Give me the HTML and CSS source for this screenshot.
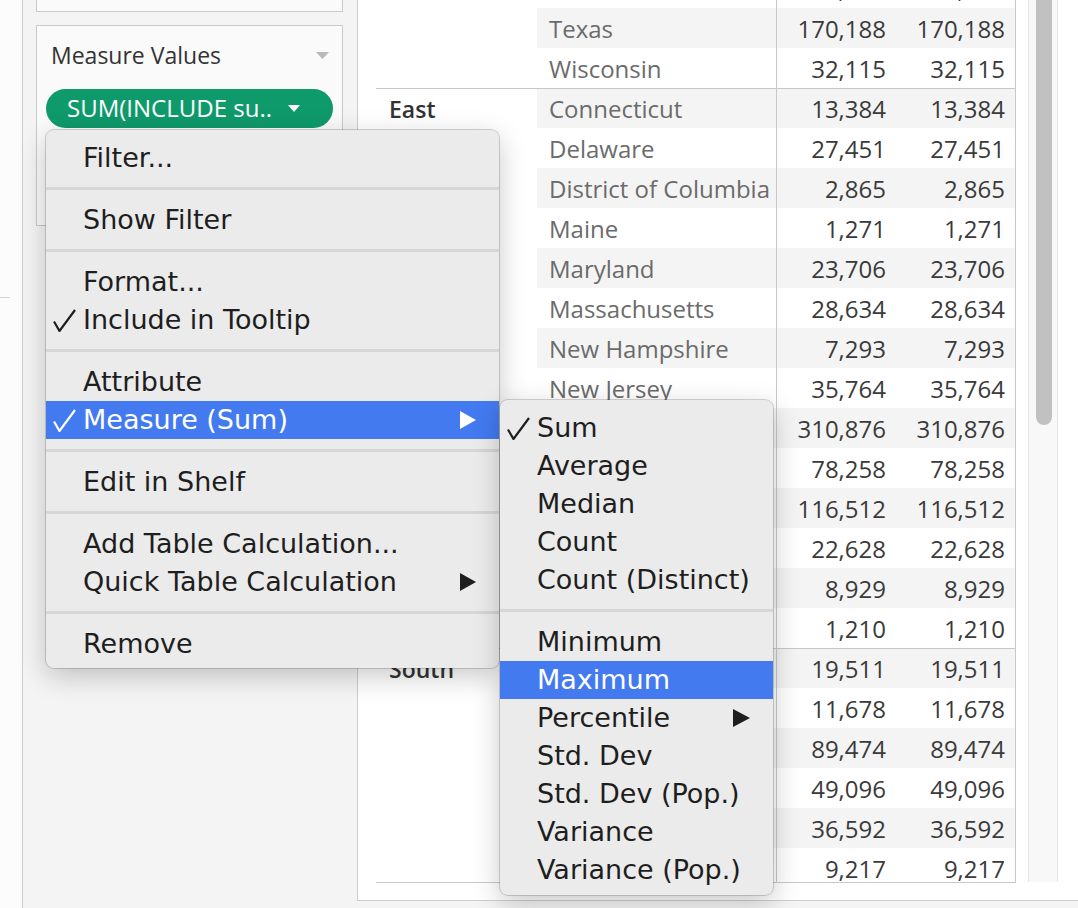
FILE: index.html
```html
<!DOCTYPE html>
<html>
<head>
<meta charset="utf-8">
<title>Measure Values menu</title>
<link rel="stylesheet" href="styles.css">
</head>
<body>
<div class="app">
  <div class="gutter"><div class="gutter-tick"></div></div>
  <aside class="sidebar">
    <div class="card card-top"></div>
    <div class="card card-mv">
      <div class="card-head">
        <span class="card-title">Measure Values</span>
        <svg class="caret-gray" width="13" height="7" viewBox="0 0 13 7"><path d="M0 0H13L6.5 7Z"/></svg>
      </div>
      <div class="pill">
        <span class="pill-text">SUM(INCLUDE su..</span>
        <svg class="caret-white" width="12" height="7" viewBox="0 0 12 7"><path d="M0 0H12L6 7Z"/></svg>
      </div>
    </div>
  </aside>
  <div class="main-wrap">
    <main class="main">
      <div class="table-view">
        <div class="rows">
          <div class="row"><div class="cell region"></div><div class="cell state"></div><div class="cell num num1">1,315</div><div class="cell num num2">1,315</div></div>
          <div class="row band"><div class="cell region"></div><div class="cell state">Texas</div><div class="cell num num1">170,188</div><div class="cell num num2">170,188</div></div>
          <div class="row"><div class="cell region"></div><div class="cell state">Wisconsin</div><div class="cell num num1">32,115</div><div class="cell num num2">32,115</div></div>
          <div class="row band group"><div class="cell region">East</div><div class="cell state">Connecticut</div><div class="cell num num1">13,384</div><div class="cell num num2">13,384</div></div>
          <div class="row"><div class="cell region"></div><div class="cell state">Delaware</div><div class="cell num num1">27,451</div><div class="cell num num2">27,451</div></div>
          <div class="row band"><div class="cell region"></div><div class="cell state">District of Columbia</div><div class="cell num num1">2,865</div><div class="cell num num2">2,865</div></div>
          <div class="row"><div class="cell region"></div><div class="cell state">Maine</div><div class="cell num num1">1,271</div><div class="cell num num2">1,271</div></div>
          <div class="row band"><div class="cell region"></div><div class="cell state">Maryland</div><div class="cell num num1">23,706</div><div class="cell num num2">23,706</div></div>
          <div class="row"><div class="cell region"></div><div class="cell state">Massachusetts</div><div class="cell num num1">28,634</div><div class="cell num num2">28,634</div></div>
          <div class="row band"><div class="cell region"></div><div class="cell state">New Hampshire</div><div class="cell num num1">7,293</div><div class="cell num num2">7,293</div></div>
          <div class="row"><div class="cell region"></div><div class="cell state">New Jersey</div><div class="cell num num1">35,764</div><div class="cell num num2">35,764</div></div>
          <div class="row band"><div class="cell region"></div><div class="cell state"></div><div class="cell num num1">310,876</div><div class="cell num num2">310,876</div></div>
          <div class="row"><div class="cell region"></div><div class="cell state"></div><div class="cell num num1">78,258</div><div class="cell num num2">78,258</div></div>
          <div class="row band"><div class="cell region"></div><div class="cell state"></div><div class="cell num num1">116,512</div><div class="cell num num2">116,512</div></div>
          <div class="row"><div class="cell region"></div><div class="cell state"></div><div class="cell num num1">22,628</div><div class="cell num num2">22,628</div></div>
          <div class="row band"><div class="cell region"></div><div class="cell state"></div><div class="cell num num1">8,929</div><div class="cell num num2">8,929</div></div>
          <div class="row"><div class="cell region"></div><div class="cell state"></div><div class="cell num num1">1,210</div><div class="cell num num2">1,210</div></div>
          <div class="row band group"><div class="cell region">South</div><div class="cell state"></div><div class="cell num num1">19,511</div><div class="cell num num2">19,511</div></div>
          <div class="row"><div class="cell region"></div><div class="cell state"></div><div class="cell num num1">11,678</div><div class="cell num num2">11,678</div></div>
          <div class="row band"><div class="cell region"></div><div class="cell state"></div><div class="cell num num1">89,474</div><div class="cell num num2">89,474</div></div>
          <div class="row"><div class="cell region"></div><div class="cell state"></div><div class="cell num num1">49,096</div><div class="cell num num2">49,096</div></div>
          <div class="row band"><div class="cell region"></div><div class="cell state"></div><div class="cell num num1">36,592</div><div class="cell num num2">36,592</div></div>
          <div class="row"><div class="cell region"></div><div class="cell state"></div><div class="cell num num1">9,217</div><div class="cell num num2">9,217</div></div>
        </div>
      </div>
      <div class="scrollbar"><div class="thumb"></div></div>
    </main>
  </div>
</div>

<div class="menu">
  <div class="mi">Filter...</div>
  <div class="sep"></div>
  <div class="mi">Show Filter</div>
  <div class="sep"></div>
  <div class="mi">Format...</div>
  <div class="mi"><svg class="chk" width="23" height="23" viewBox="0 0 23 23"><path d="M1 12.5L6.5 22L22 1" fill="none" stroke="currentColor" stroke-width="2.2"/></svg>Include in Tooltip</div>
  <div class="sep"></div>
  <div class="mi">Attribute</div>
  <div class="mi active"><svg class="chk" width="23" height="23" viewBox="0 0 23 23"><path d="M1 12.5L6.5 22L22 1" fill="none" stroke="currentColor" stroke-width="2.2"/></svg>Measure (Sum)<svg class="arrow" width="16" height="18" viewBox="0 0 16 18"><path d="M0 0L16 9L0 18Z"/></svg></div>
  <div class="sep"></div>
  <div class="mi">Edit in Shelf</div>
  <div class="sep"></div>
  <div class="mi">Add Table Calculation...</div>
  <div class="mi">Quick Table Calculation<svg class="arrow" width="16" height="18" viewBox="0 0 16 18"><path d="M0 0L16 9L0 18Z"/></svg></div>
  <div class="sep"></div>
  <div class="mi">Remove</div>
</div>

<div class="menu submenu">
  <div class="mi"><svg class="chk" width="23" height="23" viewBox="0 0 23 23"><path d="M1 12.5L6.5 22L22 1" fill="none" stroke="currentColor" stroke-width="2.2"/></svg>Sum</div>
  <div class="mi">Average</div>
  <div class="mi">Median</div>
  <div class="mi">Count</div>
  <div class="mi">Count (Distinct)</div>
  <div class="sep"></div>
  <div class="mi">Minimum</div>
  <div class="mi active">Maximum</div>
  <div class="mi">Percentile<svg class="arrow" width="17" height="18" viewBox="0 0 17 18"><path d="M0 0L17 9L0 18Z"/></svg></div>
  <div class="mi">Std. Dev</div>
  <div class="mi">Std. Dev (Pop.)</div>
  <div class="mi">Variance</div>
  <div class="mi">Variance (Pop.)</div>
</div>
</body>
</html>
```

FILE: styles.css
```css
* { box-sizing: border-box; }
html, body { margin: 0; padding: 0; }
body {
  width: 1078px;
  height: 908px;
  overflow: hidden;
  position: relative;
  background: #f4f4f4;
  font-family: "Open Sans", "DejaVu Sans", sans-serif;
}
.app { display: flex; height: 908px; }

.gutter { width: 22px; flex: none; background: #fcfcfc; padding-top: 297px; }
.gutter-tick { width: 10px; height: 1px; background: #d2d2d2; }

.sidebar {
  width: 335px;
  flex: none;
  border-left: 1px solid #cdcdcd;
  background: #f4f4f4;
  padding: 0 14px 0 13px;
  display: flex;
  flex-direction: column;
  gap: 13px;
}
.card { background: #fafafa; border: 1px solid #c9c9c9; }
.card-top { height: 12px; border-top: none; }
.card-mv { height: 201px; }
.card-head {
  display: flex;
  align-items: center;
  justify-content: space-between;
  padding: 13px 13px 0 14px;
  height: 45px;
}
.card-title { font-size: 23px; line-height: 30px; color: #333; }
.caret-gray { fill: #b9b9b9; margin-top: 0; }
.pill {
  margin: 18px 0 0 9px;
  width: 287px;
  height: 39px;
  border-radius: 20px;
  background: #0f9a6b;
  display: flex;
  align-items: center;
  padding-left: 21px;
  gap: 16px;
  color: #fff;
}
.pill-text { font-size: 24px; line-height: 30px; margin-top: -2px; }
.caret-white { fill: #fff; }

.main-wrap { flex: 1; height: 908px; background: #f4f4f4; }
.main {
  height: 901px;
  background: #fff;
  border-left: 1px solid #cdcdcd;
  border-bottom: 1px solid #cdcdcd;
  display: flex;
  align-items: flex-start;
  padding-left: 18px;
}
.table-view {
  width: 640px;
  height: 883px;
  flex: none;
  overflow: hidden;
  border-bottom: 1px solid #c8c8c8;
}
.rows { margin-top: -32px; }
.row {
  display: grid;
  grid-template-columns: 161px 239px 120px 120px;
  height: 40px;
}
.row.group { border-top: 1px solid #c8c8c8; }
.cell { display: flex; align-items: center; font-size: 24px; white-space: nowrap; overflow: hidden; }
.region { padding-left: 13px; font-weight: 600; color: #333; font-size: 23px; }
.state { padding-left: 12px; color: #6b6b6b; }
.num { justify-content: flex-end; padding-right: 10px; color: #3a3a3a; }
.num1 { border-left: 1px solid #c8c8c8; }
.num2 { border-right: 1px solid #c8c8c8; }
.row.band .state, .row.band .num { background: #f4f4f4; }

.scrollbar {
  margin-left: 12px;
  width: 30px;
  height: 882px;
  flex: none;
  background: #f8f8f8;
  border-left: 1px solid #e6e6e6;
  border-right: 1px solid #e6e6e6;
  padding-left: 7px;
}
.thumb { width: 16px; height: 425px; background: #c1c1c1; border-radius: 0 0 8px 8px; }

.menu {
  position: absolute;
  left: 46px;
  top: 130px;
  width: 453px;
  height: 538px;
  background: #ebebeb;
  border-radius: 8px;
  padding: 9px 0 5px;
  box-shadow: 0 0 0 1px rgba(0, 0, 0, 0.16), 0 8px 28px rgba(0, 0, 0, 0.22);
  font-family: "DejaVu Sans", sans-serif;
  font-size: 27px;
  color: #1e1e1e;
}
.submenu { left: 500px; top: 400px; width: 273px; height: 495px; padding-bottom: 6px; }
.mi {
  position: relative;
  height: 38px;
  line-height: 38px;
  padding-left: 37px;
  white-space: nowrap;
}
.mi.active { background: #437af0; color: #fff; }
.chk { position: absolute; left: 7px; top: 8px; }
.arrow { position: absolute; right: 23px; top: 10px; fill: currentColor; }
.sep { height: 24px; padding-top: 10px; }
.sep::before { content: ""; display: block; height: 3px; background: #d6d6d6; }
```
